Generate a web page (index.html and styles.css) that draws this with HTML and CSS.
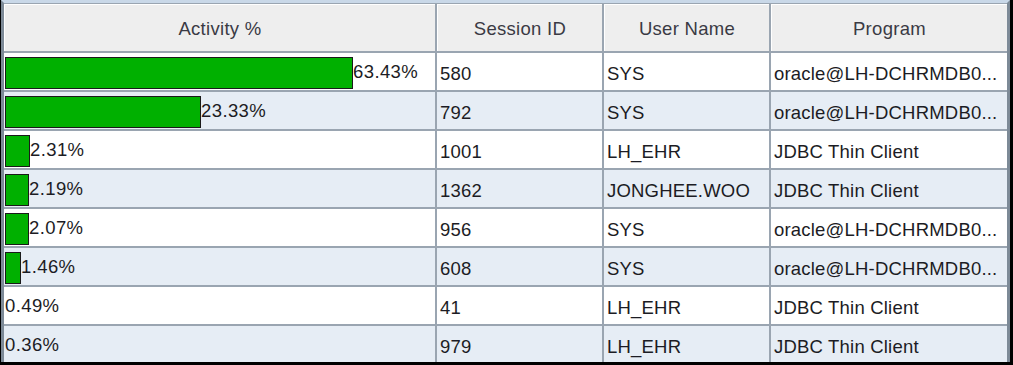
FILE: index.html
```html
<!DOCTYPE html>
<html>
<head>
<meta charset="utf-8">
<link rel="stylesheet" href="styles.css">
</head>
<body>
<div class="frame">
  <div class="grid">
    <div class="th">Activity %</div>
    <div class="th">Session ID</div>
    <div class="th">User Name</div>
    <div class="th">Program</div>

    <div class="td act"><span class="bar" style="width:348px"></span><span class="pct">63.43%</span></div>
    <div class="td">580</div><div class="td">SYS</div><div class="td">oracle@LH-DCHRMDB0...</div>

    <div class="td act alt"><span class="bar" style="width:196px"></span><span class="pct">23.33%</span></div>
    <div class="td alt">792</div><div class="td alt">SYS</div><div class="td alt">oracle@LH-DCHRMDB0...</div>

    <div class="td act"><span class="bar" style="width:25px"></span><span class="pct">2.31%</span></div>
    <div class="td">1001</div><div class="td">LH_EHR</div><div class="td">JDBC Thin Client</div>

    <div class="td act alt"><span class="bar" style="width:24px"></span><span class="pct">2.19%</span></div>
    <div class="td alt">1362</div><div class="td alt">JONGHEE.WOO</div><div class="td alt">JDBC Thin Client</div>

    <div class="td act"><span class="bar" style="width:24px"></span><span class="pct">2.07%</span></div>
    <div class="td">956</div><div class="td">SYS</div><div class="td">oracle@LH-DCHRMDB0...</div>

    <div class="td act alt"><span class="bar" style="width:16px"></span><span class="pct">1.46%</span></div>
    <div class="td alt">608</div><div class="td alt">SYS</div><div class="td alt">oracle@LH-DCHRMDB0...</div>

    <div class="td act"><span class="pct">0.49%</span></div>
    <div class="td">41</div><div class="td">LH_EHR</div><div class="td">JDBC Thin Client</div>

    <div class="td act alt"><span class="pct">0.36%</span></div>
    <div class="td alt">979</div><div class="td alt">LH_EHR</div><div class="td alt">JDBC Thin Client</div>
  </div>
</div>
</body>
</html>
```

FILE: styles.css
```css
html, body {
  margin: 0;
  padding: 0;
}
body {
  width: 1013px;
  height: 365px;
  overflow: hidden;
  background: #000;
  font-family: "Liberation Sans", Arial, sans-serif;
  font-size: 18.5px;
}
.frame {
  margin: 0 3px 0 1px;
  height: 362px;
  overflow: hidden;
  border-top: 3px solid #c9d8e8;
  border-left: 3px solid #7d8a97;
  border-right: 3px solid #7d8a97;
  background: #99a4b0;
  box-sizing: border-box;
}
.grid {
  display: grid;
  grid-template-columns: 431px 165px 165px 1fr;
  grid-template-rows: 47px repeat(8, 37px);
  column-gap: 2px;
  row-gap: 2px;
  padding-top: 1px;
  background: #9aa5b1;
}
.th {
  background: #eeeeee;
  border-top: 1px solid #ffffff;
  border-left: 1px solid #ffffff;
  color: #3a3a44;
  display: flex;
  align-items: center;
  justify-content: center;
  padding-top: 2px;
  letter-spacing: 0.3px;
}
.td {
  background: #ffffff;
  color: #1c1c24;
  display: flex;
  align-items: center;
  padding: 4px 0 0 3px;
  white-space: nowrap;
  overflow: hidden;
  box-sizing: border-box;
  letter-spacing: 0.2px;
}
.td.alt {
  background: #e6edf5;
}
.td.act {
  padding: 0 0 0 1px;
  align-items: flex-start;
}
.bar {
  display: block;
  height: 32px;
  margin-top: 4px;
  background: #00b000;
  border: 1px solid #1a1a1a;
  box-sizing: border-box;
  flex: none;
}
.pct {
  margin-top: 8px;
  letter-spacing: 0.4px;
}
```
